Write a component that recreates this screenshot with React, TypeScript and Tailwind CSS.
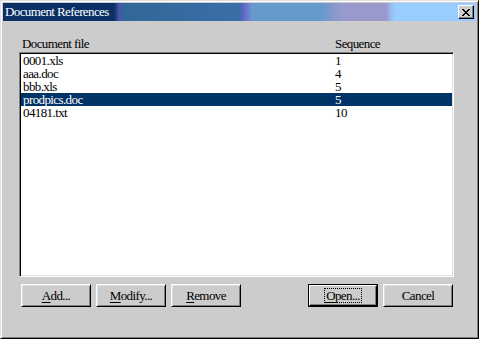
import React from 'react';

const rows = [
  { file: '0001.xls', seq: '1' },
  { file: 'aaa.doc', seq: '4' },
  { file: 'bbb.xls', seq: '5' },
  { file: 'prodpics.doc', seq: '5', selected: true },
  { file: '04181.txt', seq: '10' },
];

const CloseGlyph = () => (
  <svg width="8" height="7" viewBox="0 0 8 7" shapeRendering="crispEdges">
    <path
      d="M0 0h2v1H0zM6 0h2v1H6zM1 1h2v1H1zM5 1h2v1H5zM2 2h4v1H2zM3 3h2v1H3zM2 4h4v1H2zM1 5h2v1H1zM5 5h2v1H5zM0 6h2v1H0zM6 6h2v1H6z"
      fill="#000"
    />
  </svg>
);

const Button = ({
  label,
  hotkey,
  rest,
  isDefault,
}: {
  label?: string;
  hotkey?: string;
  rest: string;
  isDefault?: boolean;
}) => {
  const text = (
    <span>
      {hotkey && <span className="underline underline-offset-2">{hotkey}</span>}
      {rest}
    </span>
  );
  if (isDefault) {
    return (
      <div className="w-[70px] h-[23px] border border-black">
        <div className="w-full h-full flex items-center justify-center bg-[#cccccc] border-t border-l border-white border-r border-b border-r-black border-b-black shadow-[inset_-1px_-1px_#808080]">
          <span className="outline-1 outline-dotted outline-black px-[1px] leading-[13px]">{text}</span>
        </div>
      </div>
    );
  }
  return (
    <div
      className="w-[70px] h-[23px] flex items-center justify-center bg-[#cccccc] border-t border-l border-white border-r border-b border-r-black border-b-black shadow-[inset_1px_1px_#dfdfdf,inset_-1px_-1px_#808080]"
      title={label}
    >
      {text}
    </div>
  );
};

export default function App() {
  return (
    <div
      className="w-[479px] h-[339px] bg-[#cccccc] border border-t-[#dfdfdf] border-l-[#dfdfdf] border-r-black border-b-black shadow-[inset_1px_1px_#ffffff,inset_-1px_-1px_#808080] p-[2px] flex flex-col text-[13px] tracking-[-0.6px] text-black"
      style={{ fontFamily: '"Liberation Serif", "Times New Roman", serif' }}
    >
      {/* Title bar */}
      <div className="h-[18px] flex items-center justify-between bg-[linear-gradient(to_right,#0a3066_0%,#0a3066_23.5%,#4a52a8_24.5%,#336699_25.5%,#3a6ea6_50%,#6666cc_51%,#6699cc_52.5%,#6699cc_67.5%,#8899cc_70%,#9999cc_72%,#9999cc_81%,#99bbee_82%,#99ccff_83%,#99ccff_100%)]">
        <span className="pl-[2px] text-white leading-[18px]">Document References</span>
        <div className="mr-[2px] w-[16px] h-[14px] flex items-center justify-center bg-[#cccccc] border-t border-l border-white border-r border-b border-r-black border-b-black shadow-[inset_-1px_-1px_#808080]">
          <CloseGlyph />
        </div>
      </div>

      {/* Column labels */}
      <div className="mt-[15px] ml-[16px] w-[435px] h-[16px] flex leading-[16px]">
        <span className="w-[316px] pl-[3px]">Document file</span>
        <span>Sequence</span>
      </div>

      {/* List */}
      <div className="ml-[16px] w-[435px] h-[225px] bg-white border border-t-[#808080] border-l-[#808080] border-r-white border-b-white shadow-[inset_1px_1px_#000000,inset_-1px_-1px_#dfdfdf] p-[1px]">
        <div className="flex flex-col">
          {rows.map((r) => (
            <div
              key={r.file}
              className={`flex h-[13px] leading-[13px] ${r.selected ? 'bg-[#003366] text-white' : ''}`}
            >
              <span className="w-[314px] pl-[2px]">{r.file}</span>
              <span>{r.seq}</span>
            </div>
          ))}
        </div>
      </div>

      {/* Buttons */}
      <div className="mt-[7px] ml-[18px] flex">
        <div className="flex gap-[5px]">
          <Button hotkey="A" rest="dd..." />
          <Button hotkey="M" rest="odify..." />
          <Button hotkey="R" rest="emove" />
        </div>
        <div className="ml-[67px] flex gap-[5px]">
          <Button hotkey="O" rest="pen..." isDefault />
          <Button rest="Cancel" />
        </div>
      </div>
    </div>
  );
}
